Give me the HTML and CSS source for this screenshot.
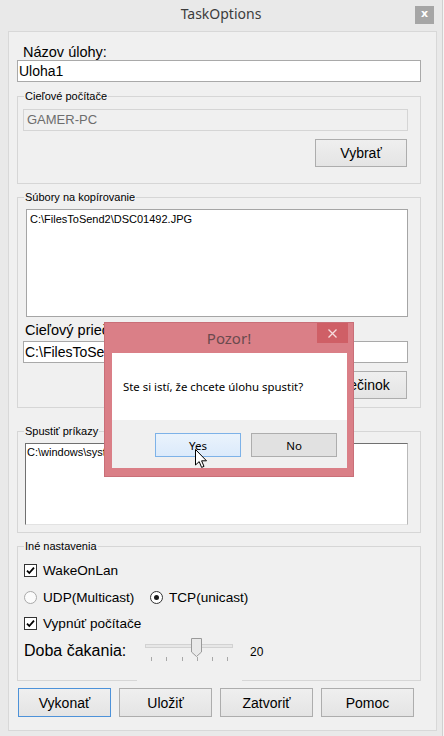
FILE: index.html
```html
<!DOCTYPE html>
<html lang="sk">
<head>
<meta charset="utf-8">
<title>TaskOptions</title>
<link rel="stylesheet" href="styles.css">
</head>
<body>
<div class="window">
  <div class="titlebar">
    <span></span>
    <span class="title">TaskOptions</span>
    <span class="close">x</span>
  </div>
  <div class="client">
    <div class="label lbl-name">Názov úlohy:</div>
    <div class="textbox">Uloha1</div>

    <fieldset class="group g1">
      <legend>Cieľové počítače</legend>
      <div class="textbox disabled">GAMER-PC</div>
      <div class="btn-row"><button class="btn">Vybrať</button></div>
    </fieldset>

    <fieldset class="group g2">
      <legend>Súbory na kopírovanie</legend>
      <div class="listbox files">C:\FilesToSend2\DSC01492.JPG</div>
      <div class="label lbl-folder">Cieľový priečinok</div>
      <div class="textbox folder">C:\FilesToSend2</div>
      <div class="btn-row"><button class="btn">Priečinok</button></div>
    </fieldset>

    <fieldset class="group g3">
      <legend>Spustiť príkazy</legend>
      <div class="listbox cmd">C:\windows\system32\cmd.exe</div>
    </fieldset>

    <fieldset class="group g4">
      <legend>Iné nastavenia</legend>
      <div class="opt-row r1">
        <span class="check"><svg width="11" height="11" viewBox="0 0 11 11"><path d="M2 5.6 L4.3 8 L9 2.6" fill="none" stroke="#000" stroke-width="1.8"/></svg></span>
        <span>WakeOnLan</span>
      </div>
      <div class="opt-row r2">
        <span class="radio-item udp"><span class="radio"></span><span>UDP(Multicast)</span></span>
        <span class="radio-item"><span class="radio on"><span class="dot"></span></span><span>TCP(unicast)</span></span>
      </div>
      <div class="opt-row r3">
        <span class="check"><svg width="11" height="11" viewBox="0 0 11 11"><path d="M2 5.6 L4.3 8 L9 2.6" fill="none" stroke="#000" stroke-width="1.8"/></svg></span>
        <span>Vypnúť počítače</span>
      </div>
      <div class="wait-row">
        <span class="wait-label">Doba čakania:</span>
        <svg class="slider" width="88" height="24" viewBox="0 0 88 24">
          <rect x="0.5" y="7.5" width="87" height="3" fill="#e7e7e7" stroke="#d2d2d2"/>
          <g stroke="#a8a8a8" stroke-width="1">
            <line x1="6.5" y1="20" x2="6.5" y2="24"/>
            <line x1="21.5" y1="20" x2="21.5" y2="24"/>
            <line x1="37.5" y1="20" x2="37.5" y2="24"/>
            <line x1="52.5" y1="20" x2="52.5" y2="24"/>
            <line x1="67.5" y1="20" x2="67.5" y2="24"/>
            <line x1="82.5" y1="20" x2="82.5" y2="24"/>
          </g>
          <path d="M46.5 1.5 H56.5 V15 L51.5 19.5 L46.5 15 Z" fill="#e9e9e9" stroke="#9a9a9a"/>
        </svg>
        <span class="wait-value">20</span>
      </div>
    </fieldset>

    <div class="actions">
      <button class="btn default">Vykonať</button>
      <button class="btn">Uložiť</button>
      <button class="btn">Zatvoriť</button>
      <button class="btn">Pomoc</button>
    </div>
  </div>

  <div class="dialog">
    <div class="dlg-title">
      <span>Pozor!</span>
      <span class="dlg-close"><svg width="9" height="9" viewBox="0 0 9 9"><path d="M0.5 0.5 L8.5 8.5 M8.5 0.5 L0.5 8.5" stroke="#f7dcde" stroke-width="1.3"/></svg></span>
    </div>
    <div class="dlg-client">
      <div class="dlg-msg">Ste si istí, že chcete úlohu spustit?</div>
      <div class="dlg-buttons">
        <button class="dlg-btn yes">Yes</button>
        <button class="dlg-btn">No</button>
      </div>
    </div>
  </div>

  <svg class="cursor" width="13" height="20" viewBox="0 0 13 20">
    <path d="M0.5 0.5 L0.5 16 L4.2 12.6 L6.6 18.4 L9 17.4 L6.6 11.8 L11.5 11.8 Z" fill="#fff" stroke="#000" stroke-width="1" stroke-linejoin="miter"/>
  </svg>
</div>
</body>
</html>
```
FILE: styles.css
```css
html, body {
  margin: 0;
  padding: 0;
}
body {
  background: #f5f5f5;
  font-family: "Liberation Sans", Arial, sans-serif;
  color: #000;
}
.window {
  position: relative;
  width: 442px;
  height: 736px;
  background: #e9e9e9;
  border-right: 1px solid #d0d0d0;
  overflow: hidden;
}
.titlebar {
  height: 31px;
  display: grid;
  grid-template-columns: 1fr auto 1fr;
  align-items: start;
}
.title {
  font-family: "Noto Sans", sans-serif;
  font-size: 14px;
  line-height: 20px;
  padding-top: 4px;
  color: #3c3c3c;
}
.close {
  justify-self: end;
  margin: 6px 8px 0 0;
  width: 19px;
  height: 18px;
  background: #a6a6a6;
  color: #fff;
  font: bold 11px/16px "DejaVu Sans", sans-serif;
  text-align: center;
}
.client {
  margin: 0 5px 0 8px;
  height: 700px;
  box-sizing: border-box;
  border: 1px solid #d8d8d8;
  background: #f0f0f0;
  padding: 12px 15px 0 8px;
}
.label {
  font-size: 14.5px;
  line-height: 16px;
  white-space: nowrap;
}
.lbl-name {
  margin-left: 6px;
}
.textbox {
  height: 22px;
  box-sizing: border-box;
  border: 1px solid #a9a9a9;
  background: #fff;
  font-size: 14px;
  line-height: 20px;
  padding: 0 1px;
  white-space: nowrap;
  overflow: hidden;
}
.textbox.disabled {
  margin-top: 6px;
  background: #f0f0f0;
  border-color: #d5d5d5;
  color: #6d6d6d;
  font-size: 13px;
  padding-left: 3px;
}
.group {
  margin: 8px 0 0;
  padding: 0 12px 0 5px;
  border: 1px solid #d6d6d6;
  min-inline-size: 0;
  min-width: 0;
}
.group legend {
  margin-left: 1px;
  padding: 0 1px;
  font-size: 11px;
  line-height: 13px;
}
.btn-row {
  display: flex;
  justify-content: flex-end;
  margin-top: 8px;
}
.btn {
  box-sizing: border-box;
  width: 92px;
  height: 28px;
  margin: 0;
  padding: 0;
  border: 1px solid #adadad;
  background: linear-gradient(#efefef, #e4e4e4);
  font-family: "Liberation Sans", Arial, sans-serif;
  font-size: 14px;
  color: #000;
}
.btn-row .btn {
  margin-right: 1px;
}
.g1 {
  padding-bottom: 16px;
}
.g2 {
  margin-top: 7px;
  padding-bottom: 8px;
}
.listbox {
  box-sizing: border-box;
  background: #fff;
  border: 1px solid #a5a5a5;
  font-size: 11px;
  line-height: 13px;
  padding: 3px;
  white-space: nowrap;
  overflow: hidden;
}
.files {
  margin: 5px 0 0 3px;
  height: 108px;
}
.lbl-folder {
  margin: 5px 0 0 2px;
}
.textbox.folder {
  margin-top: 3px;
}
.g3 {
  margin-top: 17px;
  padding-bottom: 7px;
}
.cmd {
  margin: 5px 0 0 2px;
  height: 82px;
  border-color: #707070 #b9b9b9 #e2e2e2 #707070;
  padding: 2px 1px;
}
.g4 {
  position: relative;
  margin-top: 7px;
  padding-bottom: 19px;
}
.g4::after {
  content: "";
  position: absolute;
  left: 119px;
  bottom: -1px;
  width: 105px;
  height: 1px;
  background: #f0f0f0;
}
.opt-row {
  display: flex;
  align-items: center;
  height: 18px;
  margin-left: 1px;
  font-size: 13.6px;
  white-space: nowrap;
}
.r1 { margin-top: 8px; }
.r2 { margin-top: 9px; }
.r3 { margin-top: 8px; }
.check {
  box-sizing: border-box;
  width: 13px;
  height: 13px;
  border: 1px solid #333;
  background: #fff;
  margin-right: 6px;
  display: flex;
}
.radio-item {
  display: flex;
  align-items: center;
}
.radio-item.udp {
  width: 126px;
}
.radio {
  box-sizing: border-box;
  width: 13px;
  height: 13px;
  border-radius: 50%;
  border: 1px solid #a9a9a9;
  background: #fbfbfb;
  margin-right: 6px;
  display: flex;
  align-items: center;
  justify-content: center;
}
.radio.on {
  border-color: #333;
  background: #fff;
}
.dot {
  width: 5px;
  height: 5px;
  border-radius: 50%;
  background: #1a1a1a;
}
.wait-row {
  display: grid;
  grid-template-columns: 121px 88px auto;
  height: 24px;
  margin: 5px 0 0 1px;
  align-items: start;
}
.wait-label {
  font-size: 16px;
  line-height: 18px;
  margin-top: 5px;
  white-space: nowrap;
}
.slider {
  display: block;
}
.wait-value {
  font-size: 12px;
  line-height: 14px;
  margin: 8px 0 0 17px;
}
.actions {
  display: grid;
  grid-template-columns: repeat(4, 93px);
  column-gap: 8px;
  margin: 7px 0 0 1px;
}
.actions .btn {
  width: 93px;
  height: 29px;
}
.btn.default {
  border-color: #4d92d9;
}

/* dialog */
.dialog {
  position: absolute;
  left: 104px;
  top: 322px;
  width: 250px;
  height: 155px;
  box-sizing: border-box;
  background: #da7f87;
  border: 1px solid #c96f78;
  display: flex;
  flex-direction: column;
}
.dlg-title {
  position: relative;
  height: 30px;
  display: flex;
  justify-content: center;
  align-items: center;
  font-family: "Noto Sans", sans-serif;
  font-size: 15px;
  color: #6a4a4e;
}
.dlg-close {
  position: absolute;
  top: 0;
  right: 5px;
  width: 31px;
  height: 20px;
  background: #cf5f66;
  display: flex;
  align-items: center;
  justify-content: center;
}
.dlg-client {
  margin: 0 6px 8px 7px;
  display: flex;
  flex-direction: column;
}
.dlg-msg {
  height: 67px;
  background: #fff;
  display: flex;
  align-items: center;
  padding-left: 11px;
  font-family: "Noto Sans", sans-serif;
  font-size: 11.4px;
  color: #000;
}
.dlg-buttons {
  height: 48px;
  box-sizing: border-box;
  background: #f0f0f0;
  display: flex;
  justify-content: flex-end;
  gap: 10px;
  padding: 13px 10px 0 0;
}
.dlg-btn {
  box-sizing: border-box;
  width: 86px;
  height: 24px;
  margin: 0;
  padding: 0;
  border: 1px solid #adadad;
  background: #e1e1e1;
  font-family: "Noto Sans", sans-serif;
  font-size: 11.5px;
  color: #000;
}
.dlg-btn.yes {
  border-color: #7db2e8;
  background: linear-gradient(#eaf3fc, #dbeafb);
}
.cursor {
  position: absolute;
  left: 195px;
  top: 449px;
}
```
